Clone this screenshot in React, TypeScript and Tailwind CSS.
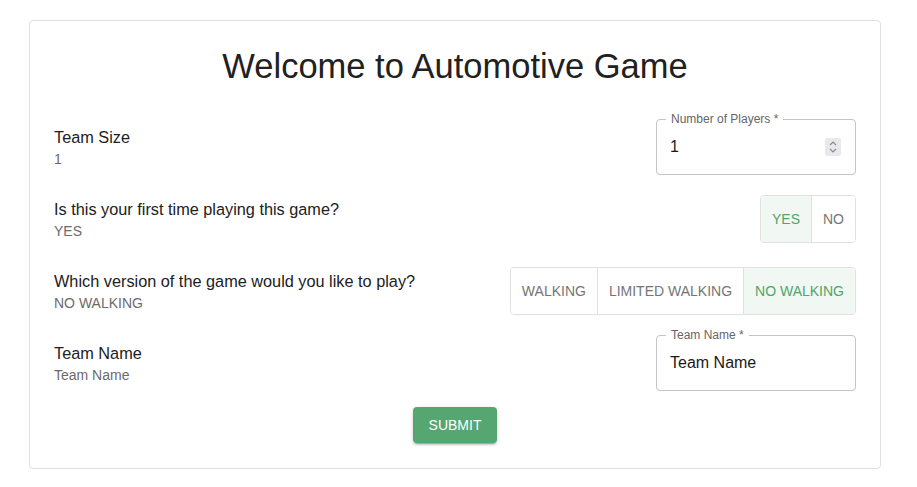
import { useState } from 'react'

const font = { fontFamily: '"Liberation Sans", Arial, sans-serif' }

export default function App() {
  const [players, setPlayers] = useState('1')
  const [firstTime, setFirstTime] = useState('YES')
  const [version, setVersion] = useState('NO WALKING')
  const [teamName, setTeamName] = useState('Team Name')

  return (
    <div className="min-h-[487px] bg-white pl-[29px] pr-[36px] pt-[20px]" style={font}>
      <div className="border border-[#e0e0e0] rounded-[4px] bg-white px-6 pt-6 pb-[25px]">
        <h1 className="text-center text-[34.5px] leading-[42px] text-[#212121] font-normal mb-[24px]">
          Welcome to Automotive Game
        </h1>

        <Row label="Team Size" value={players}>
          <OutlinedField label="Number of Players *" value={players} onChange={setPlayers} spinner />
        </Row>

        <Row label="Is this your first time playing this game?" value={firstTime}>
          <ToggleGroup options={['YES', 'NO']} value={firstTime} onChange={setFirstTime} />
        </Row>

        <Row label="Which version of the game would you like to play?" value={version}>
          <ToggleGroup
            options={['WALKING', 'LIMITED WALKING', 'NO WALKING']}
            value={version}
            onChange={setVersion}
          />
        </Row>

        <Row label="Team Name" value={teamName}>
          <OutlinedField label="Team Name *" value={teamName} onChange={setTeamName} />
        </Row>

        <div className="flex justify-center mt-[8px]">
          <button className="h-[36px] px-4 rounded-[4px] bg-[#55a671] text-white text-sm shadow-[0_3px_1px_-2px_rgba(0,0,0,0.2),0_2px_2px_0_rgba(0,0,0,0.14),0_1px_5px_0_rgba(0,0,0,0.12)]">
            SUBMIT
          </button>
        </div>
      </div>
    </div>
  )
}

function Row({ label, value, children }: { label: string; value: string; children: React.ReactNode }) {
  return (
    <div className="flex items-center justify-between h-[72px]">
      <div>
        <p className="text-[16.3px] leading-6 text-[#212121]">{label}</p>
        <p className="text-sm leading-5 text-[#6b6b6b]">{value}</p>
      </div>
      {children}
    </div>
  )
}

function OutlinedField({
  label,
  value,
  onChange,
  spinner,
}: {
  label: string
  value: string
  onChange: (v: string) => void
  spinner?: boolean
}) {
  return (
    <div className="relative w-[200px] h-[56px] border border-[#c4c4c4] rounded-[4px] flex items-center pl-[13px] pr-[14px]">
      <span className="absolute left-[9px] -top-[9px] px-[5px] bg-white text-xs leading-4 text-[#666]">
        {label}
      </span>
      <input
        className="flex-1 min-w-0 outline-none text-base text-[#1a1a1a] bg-transparent"
        value={value}
        onChange={(e) => onChange(e.target.value)}
      />
      {spinner && (
        <div className="w-[16px] h-[18px] bg-[#e9e9ed] rounded-[2px] flex items-center justify-center">
          <svg width="10" height="14" viewBox="0 0 10 14" fill="none" stroke="#8a8a8e" strokeWidth="1.2">
            <path d="M2 5l3-3 3 3" />
            <path d="M2 9l3 3 3-3" />
          </svg>
        </div>
      )}
    </div>
  )
}

function ToggleGroup({
  options,
  value,
  onChange,
}: {
  options: string[]
  value: string
  onChange: (v: string) => void
}) {
  return (
    <div className="flex rounded-[4px] border border-[#e0e0e0] overflow-hidden">
      {options.map((o, i) => {
        const selected = o === value
        return (
          <button
            key={o}
            onClick={() => onChange(o)}
            className={
              'h-[46px] px-[11px] text-sm ' +
              (i > 0 ? 'border-l border-[#e0e0e0] ' : '') +
              (selected ? 'bg-[#f1f7f3] text-[#4ea66a]' : 'bg-white text-[#757575]')
            }
          >
            {o}
          </button>
        )
      })}
    </div>
  )
}
